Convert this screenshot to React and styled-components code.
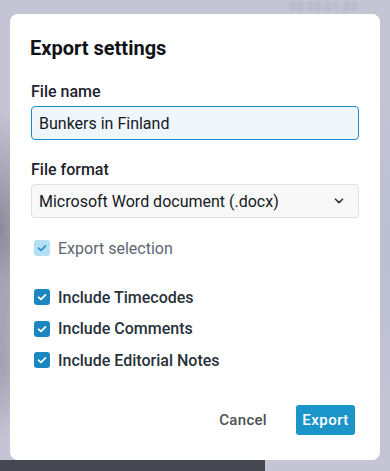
import React from 'react'
import styled, { createGlobalStyle } from 'styled-components'

const Global = createGlobalStyle`
  html, body {
    margin: 0;
    padding: 0;
    height: 100%;
  }
  body {
    font-family: Roboto, "Liberation Sans", Arial, sans-serif;
    background: #c4c4d4;
  }
`

const options = [
  { label: 'Include Timecodes', checked: true },
  { label: 'Include Comments', checked: true },
  { label: 'Include Editorial Notes', checked: true },
]

function Check({ muted }) {
  return (
    <Box $muted={muted}>
      <svg width="10" height="8" viewBox="0 0 10 8" fill="none">
        <path d="M1.5 4.2 L4 6.4 L8.5 1.8" stroke={muted ? '#2b93c9' : '#ffffff'} strokeWidth="1.7" strokeLinecap="round" strokeLinejoin="round" />
      </svg>
    </Box>
  )
}

export default function App() {
  return (
    <>
      <Global />
      <Backdrop>
        <Timecode>00:00:01:03</Timecode>
        <Modal>
          <Titulo>Export settings</Titulo>

          <Campo>
            <Rotulo>File name</Rotulo>
            <Entrada defaultValue="Bunkers in Finland" />
          </Campo>

          <Campo>
            <Rotulo>File format</Rotulo>
            <Seletor>
              <span>Microsoft Word document (.docx)</span>
              <svg width="10" height="6" viewBox="0 0 10 6" fill="none">
                <path d="M1.5 1.2 L5 4.6 L8.5 1.2" stroke="#333" strokeWidth="1.6" strokeLinecap="round" strokeLinejoin="round" />
              </svg>
            </Seletor>
          </Campo>

          <Linha $muted>
            <Check muted />
            Export selection
          </Linha>

          <Grupo>
            {options.map(o => (
              <Linha key={o.label}>
                <Check />
                {o.label}
              </Linha>
            ))}
          </Grupo>

          <Acoes>
            <Cancelar>Cancel</Cancelar>
            <Exportar>Export</Exportar>
          </Acoes>
        </Modal>
        <Rodape />
      </Backdrop>
    </>
  )
}

const Backdrop = styled.div`
  position: relative;
  width: 390px;
  height: 471px;
  overflow: hidden;
  box-sizing: border-box;
  padding: 14px 10px 0 10px;
  background:
    radial-gradient(ellipse 40px 120px at 0px 230px, rgba(90, 90, 105, 0.55), transparent),
    radial-gradient(ellipse 30px 80px at 0px 360px, rgba(110, 110, 125, 0.45), transparent),
    radial-gradient(ellipse 20px 160px at 388px 250px, rgba(175, 185, 205, 0.5), transparent),
    #c4c4d4;
`

const Timecode = styled.div`
  position: absolute;
  top: 0;
  right: 32px;
  font-size: 11px;
  color: #a9a9bd;
  letter-spacing: 1px;
  filter: blur(1.2px);
`

const Rodape = styled.div`
  position: absolute;
  left: 0;
  bottom: 0;
  width: 265px;
  height: 11px;
  background: #474752;
`

const Modal = styled.div`
  position: relative;
  z-index: 1;
  width: 370px;
  height: 446px;
  box-sizing: border-box;
  background: #ffffff;
  border-radius: 8px;
  padding: 22px 21px 25px 21px;
  display: flex;
  flex-direction: column;
`

const Titulo = styled.h2`
  margin: 0 0 22px -1px;
  font-size: 20px;
  line-height: 24px;
  font-weight: 700;
  color: #111318;
`

const Campo = styled.div`
  display: flex;
  flex-direction: column;
  gap: 4px;
  margin-bottom: 20px;
`

const Rotulo = styled.label`
  font-size: 16px;
  line-height: 20px;
  font-weight: 500;
  color: #1d232b;
`

const Entrada = styled.input`
  height: 34px;
  box-sizing: border-box;
  border: 1px solid #1f8bc6;
  border-radius: 4px;
  background: #eff6fc;
  padding: 0 7px;
  font-family: inherit;
  font-size: 16px;
  color: #15191e;
  outline: none;
`

const Seletor = styled.div`
  height: 34px;
  box-sizing: border-box;
  border: 1px solid #dcdfe3;
  border-radius: 4px;
  background: #f8f8f8;
  padding: 0 14px 0 7px;
  display: flex;
  align-items: center;
  justify-content: space-between;
  font-size: 16px;
  color: #15191e;
`

const Linha = styled.div`
  display: flex;
  align-items: center;
  gap: 8px;
  height: 20px;
  padding-left: 3px;
  font-size: 16px;
  font-weight: ${p => (p.$muted ? 400 : 500)};
  color: ${p => (p.$muted ? '#5d6670' : '#29313b')};
`

const Box = styled.span`
  width: 16px;
  height: 16px;
  border-radius: 3px;
  background: ${p => (p.$muted ? '#b4e0f6' : '#1a87c0')};
  display: flex;
  align-items: center;
  justify-content: center;
`

const Grupo = styled.div`
  display: flex;
  flex-direction: column;
  gap: 11.5px;
  margin-top: 29px;
`

const Acoes = styled.div`
  margin-top: auto;
  margin-right: 4px;
  display: flex;
  justify-content: flex-end;
  align-items: center;
  gap: 29px;
`

const Cancelar = styled.button`
  border: none;
  background: none;
  padding: 0;
  font-family: inherit;
  font-size: 15px;
  font-weight: 500;
  letter-spacing: 0.3px;
  color: #4d4f53;
  cursor: pointer;
`

const Exportar = styled.button`
  border: none;
  width: 59px;
  height: 30px;
  border-radius: 3px;
  background: #1b95c9;
  color: #ffffff;
  font-family: inherit;
  font-size: 15px;
  font-weight: 500;
  letter-spacing: 0.5px;
  padding: 0;
  cursor: pointer;
`
